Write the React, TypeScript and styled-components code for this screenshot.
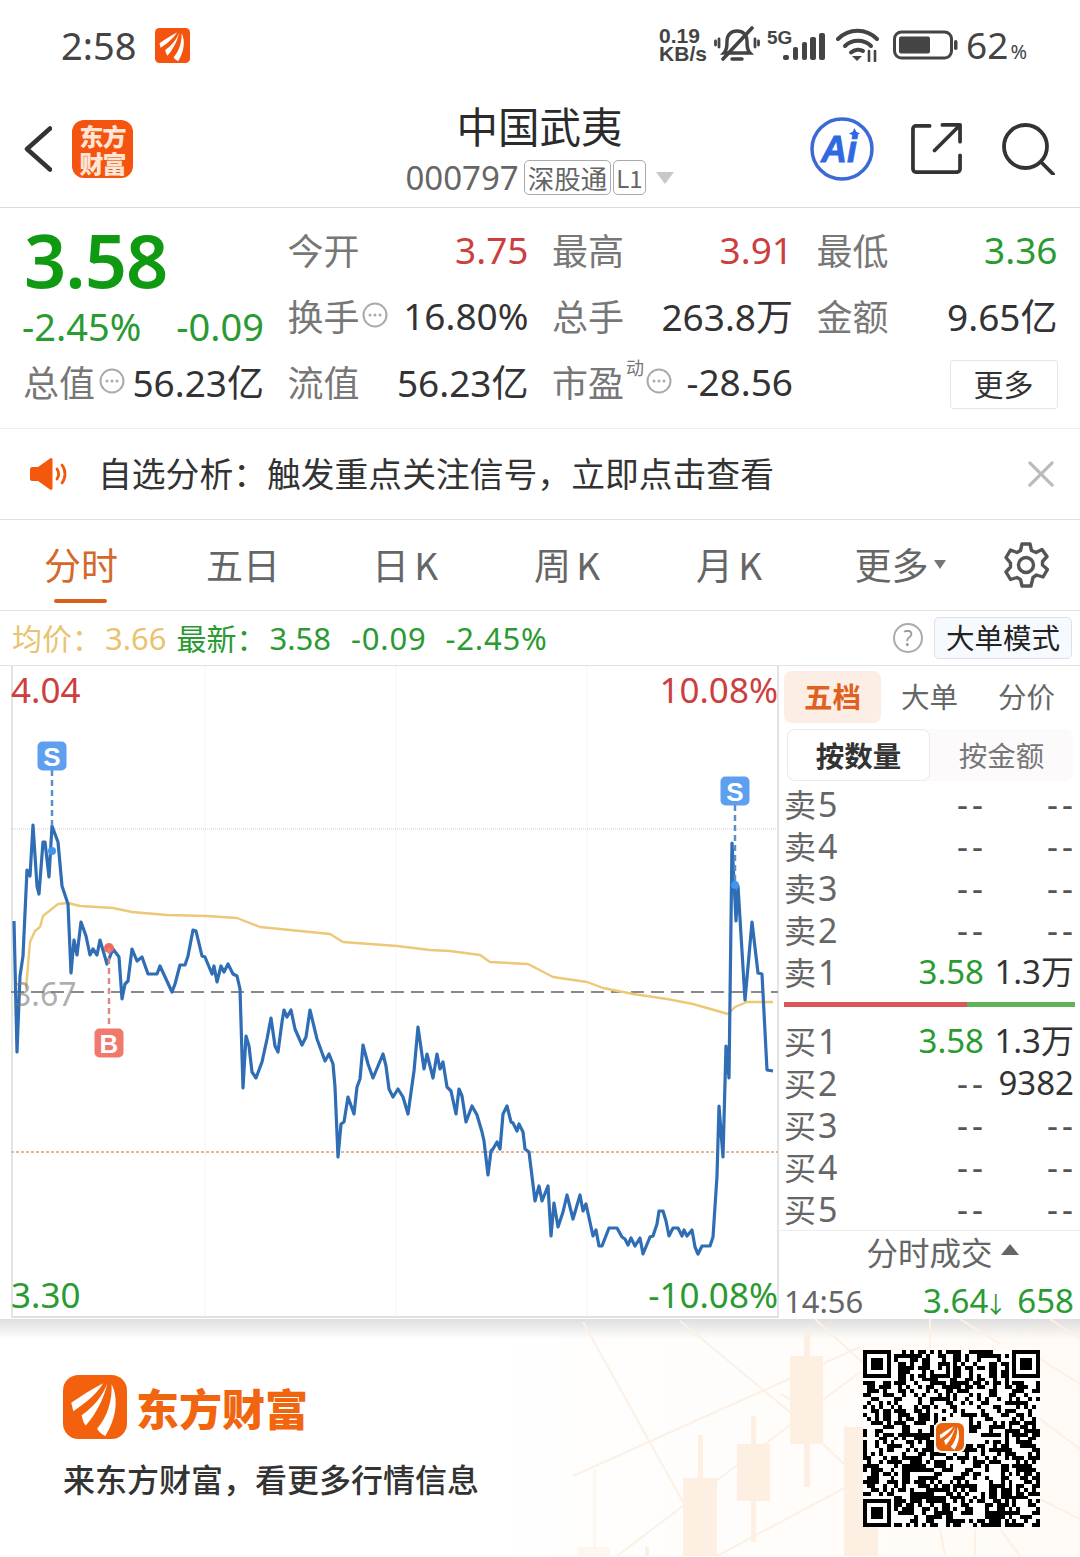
import React from "react";
import styled, { createGlobalStyle } from "styled-components";

const GlobalStyle = createGlobalStyle`
  html, body { margin: 0; padding: 0; background: #fff; }
  * { box-sizing: border-box; }
  body { font-family: "Noto Sans", "Noto Sans CJK SC", sans-serif; color: #333; }
`;

const RED = "#cc3f3f";
const GREEN = "#2a9a32";
const YELLOW = "#e9c36f";
const CJK = `"Noto Sans CJK SC", "Noto Sans", sans-serif`;

const Page = styled.div`
  width: 1080px;
  height: 1557px;
  overflow: hidden;
  display: flex;
  flex-direction: column;
`;

/* status bar */
const StatusBar = styled.div`
  height: 90px;
  flex: none;
  display: flex;
  align-items: center;
  padding: 0 53px 0 61px;
  color: #444;
`;
const Clock = styled.span`
  font-size: 38px;
  line-height: 1;
  margin: -1px 19px 0 0;
`;
const StatusRight = styled.div`
  margin-left: auto;
  display: flex;
  align-items: center;
`;
const NetSpeed = styled.div`
  font-family: "Liberation Sans", sans-serif;
  font-weight: 700;
  font-size: 21px;
  line-height: 18px;
  width: 55px;
`;
const BatteryText = styled.span`
  font-size: 37px;
  line-height: 1;
  margin: -1px 0 0 7px;
  small { font-size: 20px; margin-left: 2px; }
`;

/* header */
const Header = styled.div`
  height: 118px;
  flex: none;
  display: grid;
  grid-template-columns: 1fr auto 1fr;
  align-items: center;
  padding: 0 25px 0 24px;
  border-bottom: 1px solid #dcdcdc;
`;
const HeaderLeft = styled.div`
  display: flex;
  align-items: center;
  gap: 20px;
`;
const AppBadge = styled.div`
  width: 61px;
  height: 58px;
  border-radius: 12px;
  background: #f4540f;
  color: #ffe6d4;
  font-family: ${CJK};
  font-weight: 900;
  font-size: 24px;
  line-height: 27px;
  letter-spacing: -1px;
  text-align: center;
  padding-top: 2px;
`;
const TitleBlock = styled.div`
  display: flex;
  flex-direction: column;
  align-items: center;
  margin-top: -1px;
`;
const StockName = styled.div`
  font-family: ${CJK};
  font-size: 41.5px;
  line-height: 52px;
  color: #2b2b2b;
`;
const CodeRow = styled.div`
  display: flex;
  align-items: center;
  height: 40px;
  margin-top: 7px;
  gap: 2px;
`;
const Code = styled.span`
  font-size: 33px;
  line-height: 1;
  color: #666;
  margin-right: 3px;
`;
const Tag = styled.span`
  border: 1px solid #aaa;
  border-radius: 5px;
  height: 35px;
  padding: 0 3px;
  display: flex;
  align-items: center;
  font-family: ${CJK};
  font-size: 26.5px;
  color: #666;
`;
const LevelTag = styled(Tag)`
  padding: 0 2px;
  font-size: 24px;
`;
const DropArrow = styled.span`
  width: 0;
  height: 0;
  margin-left: 8px;
  border-left: 9px solid transparent;
  border-right: 9px solid transparent;
  border-top: 12px solid #c8c8c8;
`;
const HeaderRight = styled.div`
  display: flex;
  align-items: center;
  justify-content: flex-end;
  gap: 37px;
`;

/* quote */
const Quote = styled.div`
  height: 221px;
  flex: none;
  padding: 8px 23px 0 24px;
  display: grid;
  grid-template-columns: 240px 240px 240px 240px;
  column-gap: 24.5px;
  grid-template-rows: repeat(3, 66px);
  border-bottom: 1px solid #eee;
`;
const PriceCol = styled.div`
  grid-row: 1 / span 3;
  display: flex;
  flex-direction: column;
`;
const BigPrice = styled.div`
  height: 88px;
  font-size: 74px;
  font-weight: 600;
  line-height: 88px;
  color: #0f9a12;
  letter-spacing: -1px;
`;
const ChangeRow = styled.div`
  height: 44px;
  display: flex;
  justify-content: space-between;
  align-items: center;
  font-size: 38px;
  color: ${GREEN};
  margin-left: -2px;
`;
const Cell = styled.div`
  display: flex;
  align-items: center;
  font-size: 37px;
  white-space: nowrap;
`;
const TotalCell = styled(Cell)`
  height: 66px;
`;
const Label = styled.span`
  font-family: ${CJK};
  color: #777;
  font-size: 36px;
  margin-left: -1px;
`;
const Value = styled.span<{ $color?: string }>`
  margin-left: auto;
  color: ${(p) => p.$color || "#333"};
  font-family: "Noto Sans", "Noto Sans CJK SC", sans-serif;
`;
const Sup = styled.sup`
  font-family: ${CJK};
  font-size: 18px;
  color: #777;
  margin: 0 -18px 0 2px;
  line-height: 1;
  align-self: flex-start;
  padding-top: 10px;
`;
const MoreBtn = styled.div`
  margin-left: auto;
  margin-top: 7px;
  width: 108px;
  height: 49px;
  padding-bottom: 4px;
  border: 1px solid #e6e6e6;
  border-radius: 3px;
  display: flex;
  align-items: center;
  justify-content: center;
  font-family: ${CJK};
  font-size: 30px;
  color: #333;
`;

/* notice */
const Notice = styled.div`
  height: 91px;
  flex: none;
  display: flex;
  align-items: center;
  padding: 0 26px 0 30px;
  border-bottom: 1px solid #e2e2e2;
`;
const NoticeText = styled.span`
  font-family: ${CJK};
  font-size: 33.8px;
  color: #333;
  margin: -4px 0 0 30px;
  white-space: nowrap;
`;

/* period tabs */
const Tabs = styled.div`
  height: 91px;
  flex: none;
  display: flex;
  align-items: center;
  border-bottom: 1px solid #e2e2e2;
`;
const Tab = styled.div<{ $active?: boolean }>`
  width: 162px;
  height: 100%;
  position: relative;
  display: flex;
  align-items: center;
  justify-content: center;
  padding-bottom: 2px;
  font-family: ${CJK};
  font-size: 37px;
  word-spacing: -3px;
  color: ${(p) => (p.$active ? "#d4692a" : "#666")};
  ${(p) =>
    p.$active &&
    `&::after {
      content: "";
      position: absolute;
      left: 54px;
      bottom: 7px;
      width: 53px;
      height: 4px;
      border-radius: 2px;
      background: #d9601a;
    }`}
`;
const TabMore = styled(Tab)`
  padding-left: 18px;
  gap: 5px;
`;
const TinyDown = styled.span`
  width: 0;
  height: 0;
  border-left: 6px solid transparent;
  border-right: 6px solid transparent;
  border-top: 9px solid #777;
`;
const GearWrap = styled.div`
  margin-left: 31px;
  display: flex;
`;

/* info line */
const InfoLine = styled.div`
  height: 55px;
  flex: none;
  display: flex;
  align-items: center;
  padding: 0 8px 0 12px;
  font-size: 31px;
  border-bottom: 1px solid #e2e2e2;
`;
const InfoCjk = styled.span<{ $color: string; $gap?: number }>`
  font-family: ${CJK};
  font-size: 30px;
  margin: -2px 0 0 ${(p) => p.$gap || 0}px;
  color: ${(p) => p.$color};
`;
const InfoNum = styled.span<{ $color: string; $gap: number; $wide?: boolean }>`
  color: ${(p) => p.$color};
  margin-left: ${(p) => p.$gap}px;
  margin-right: -1px;
  letter-spacing: ${(p) => (p.$wide ? "0.8px" : 0)};
`;
const HelpIcon = styled.span`
  margin-left: auto;
  width: 30px;
  height: 30px;
  border: 2px solid #aaa;
  border-radius: 50%;
  display: flex;
  align-items: center;
  justify-content: center;
  color: #999;
  font-size: 21px;
  line-height: 1;
`;
const ModeBtn = styled.div`
  margin-left: 11px;
  width: 138px;
  height: 42px;
  padding-bottom: 3px;
  background: #f6f9fd;
  border: 1px solid #dde2ea;
  border-radius: 5px;
  display: flex;
  align-items: center;
  justify-content: center;
  font-family: ${CJK};
  font-size: 28.5px;
  color: #222;
`;

/* chart + order book */
const Market = styled.div`
  height: 653px;
  flex: none;
  display: flex;
  padding-left: 11px;
`;
const ChartBox = styled.div`
  width: 768px;
  height: 652px;
  position: relative;
  border-left: 2px solid #e4e4e4;
  border-right: 2px solid #e4e4e4;
  border-bottom: 2px solid #e0e0e0;
`;
const ChartSvg = styled.svg`
  display: block;
  position: absolute;
  left: -2px;
  top: 0;
`;
const ChartLabel = styled.span<{ $color: string; $side: "left" | "right"; $bottom?: boolean }>`
  position: absolute;
  ${(p) => (p.$side === "left" ? "left: -2px;" : "right: -1px;")}
  ${(p) => (p.$bottom ? "bottom: -2px;" : "top: 1px;")}
  font-size: 35px;
  line-height: 46px;
  color: ${(p) => p.$color};
`;
const MidLabel = styled.span`
  position: absolute;
  left: 0;
  top: 305px;
  font-size: 32px;
  line-height: 46px;
  color: rgba(120, 120, 120, 0.6);
`;
const Book = styled.div`
  flex: 1;
  padding: 5px 0 0 5px;
  display: flex;
  flex-direction: column;
`;
const BookTabs = styled.div`
  height: 52px;
  flex: none;
  display: grid;
  grid-template-columns: 97px 97px 97px;
  align-items: stretch;
`;
const BookTab = styled.div<{ $active?: boolean }>`
  display: flex;
  align-items: center;
  justify-content: center;
  padding-bottom: 4px;
  font-family: ${CJK};
  font-size: 28.5px;
  font-weight: ${(p) => (p.$active ? 700 : 400)};
  color: ${(p) => (p.$active ? "#e0601f" : "#666")};
  background: ${(p) => (p.$active ? "#fdeee5" : "transparent")};
  border-radius: 8px;
`;
const ModeTabs = styled.div`
  height: 52px;
  flex: none;
  margin: 6px 7px 2px 3px;
  display: grid;
  grid-template-columns: 143px 1fr;
  background: #fdfafc;
  border-radius: 8px;
`;
const ModeTab = styled.div<{ $active?: boolean }>`
  display: flex;
  align-items: center;
  justify-content: center;
  padding-bottom: 2px;
  font-family: ${CJK};
  font-size: 28.5px;
  font-weight: ${(p) => (p.$active ? 700 : 400)};
  color: ${(p) => (p.$active ? "#333" : "#777")};
  background: ${(p) => (p.$active ? "#fff" : "transparent")};
  border: ${(p) => (p.$active ? "1px solid #eaeaea" : "none")};
  border-radius: 8px;
`;
const BookRow = styled.div`
  height: 42px;
  flex: none;
  display: grid;
  grid-template-columns: 1fr 120px 90px;
  align-items: center;
  padding: 0 6px 2px 0;
  font-size: 33px;
  white-space: nowrap;
`;
const RowName = styled.span`
  display: flex;
  align-items: baseline;
  gap: 2px;
  color: #666;
  font-size: 34px;
  line-height: 40px;
  em {
    font-style: normal;
    font-family: ${CJK};
    font-size: 32px;
    line-height: 40px;
  }
`;
const RowPrice = styled.span<{ $color?: string }>`
  text-align: right;
  line-height: 40px;
  color: ${(p) => p.$color || "#555"};
  ${(p) => !p.$color && "font-size: 34px; letter-spacing: 4px; margin-right: -3px;"}
`;
const RowQty = styled.span<{ $dash?: boolean }>`
  text-align: right;
  line-height: 40px;
  color: ${(p) => (p.$dash ? "#555" : "#333")};
  ${(p) => p.$dash && "font-size: 34px; letter-spacing: 4px; margin-right: -3px;"}
`;
const DepthBar = styled.div`
  height: 5px;
  flex: none;
  margin: 9px 5px 13px 0;
  display: flex;
`;
const DepthPart = styled.div<{ $color: string; $grow: number }>`
  flex: ${(p) => p.$grow};
  background: ${(p) => p.$color};
`;
const TradeTitle = styled.div`
  height: 46px;
  flex: none;
  margin-left: -5px;
  padding: 0 0 5px 26px;
  border-top: 1px solid #eee;
  display: flex;
  align-items: center;
  justify-content: center;
  gap: 8px;
  font-family: ${CJK};
  font-size: 31.5px;
  color: #666;
`;
const UpArrow = styled.span`
  width: 0;
  height: 0;
  margin-bottom: 3px;
  border-left: 9px solid transparent;
  border-right: 9px solid transparent;
  border-bottom: 11px solid #666;
`;
const TradeRow = styled.div`
  height: 48px;
  flex: none;
  display: flex;
  align-items: center;
  padding: 1px 6px 0 0;
  font-size: 33px;
  color: ${GREEN};
  white-space: nowrap;
`;
const TradeTime = styled.span`
  color: #666;
  font-size: 31px;
  margin-right: auto;
`;
const TradeArrow = styled.span`
  font-size: 23px;
  margin: 0 -5px 0 -4px;
`;
const TradeQty = styled.span`
  margin-left: 15px;
`;

/* footer */
const Footer = styled.div`
  flex: 1;
  position: relative;
  padding: 0 0 0 63px;
  background:
    linear-gradient(180deg, #dedede 0, rgba(255, 255, 255, 0) 20px),
    linear-gradient(90deg, #fff 45%, #fffaf5 100%);
`;
const FooterArt = styled.svg`
  position: absolute;
  left: 0;
  top: 0;
`;
const FooterLeft = styled.div`
  position: relative;
  padding-top: 56px;
`;
const Brand = styled.div`
  display: flex;
  align-items: center;
  gap: 9px;
`;
const BrandName = styled.span`
  font-family: ${CJK};
  font-weight: 900;
  font-size: 43px;
  line-height: 64px;
  color: #f1650f;
`;
const Slogan = styled.div`
  font-family: ${CJK};
  font-weight: 500;
  font-size: 32px;
  line-height: 40px;
  margin-top: 19px;
  color: #333;
`;
const QrBox = styled.div`
  position: absolute;
  left: 863px;
  top: 31px;
  width: 177px;
  height: 177px;
  background: #fff;
`;
const QrLogo = styled.div`
  position: absolute;
  left: 73px;
  top: 73px;
  display: flex;
  border-radius: 6px;
  outline: 2px solid #fff;
`;

/* icons */
const Sail: React.FC<{ size: number; bg?: string; rx?: number }> = ({ size, bg = "#f4610c", rx = 15 }) => (
  <svg width={size} height={size} viewBox="0 0 62 62" style={{ display: "block", flex: "none" }}>
    <rect width="62" height="62" rx={rx} fill={bg} />
    <g fill="#fff">
      <path d="M8 27C18 20 29 13 39 8C33 18 22 27 10 35Z" />
      <path d="M43 8C40 22 32 38 22 49C19 45 19 42 18 39C30 31 39 19 43 8Z" />
      <path d="M47 9C54 22 52 42 41 59C37 57 35 55 33 52C43 41 48 24 47 9Z" />
    </g>
  </svg>
);

const MuteBell = () => (
  <svg width="46" height="38" viewBox="0 0 46 38" fill="none" stroke="#444" strokeLinecap="round">
    <path d="M10 27c3-3 3-7 3-12 0-6 4-10 10-10 6 0 10 4 10 10 0 5 0 9 3 12z" strokeWidth="3.400" />
    <path d="M18 33h10" strokeWidth="3.400" />
    <path d="M38 2L9 33" strokeWidth="3.600" />
    <path d="M5 13v8M1.500 15v4M41 13v8M44.500 15v4" strokeWidth="2.800" />
  </svg>
);
const Signal = () => (
  <svg width="60" height="36" viewBox="0 -4 60 36" fill="#444" style={{ marginLeft: 7, marginTop: -4 }}>
    <text x="0" y="15" fontFamily="Liberation Sans" fontWeight="700" fontSize="19">5G</text>
    <rect x="16" y="26" width="6" height="5" rx="2" />
    <rect x="26" y="18" width="5" height="13" rx="2" />
    <rect x="35" y="13" width="5" height="18" rx="2" />
    <rect x="43" y="8" width="6" height="23" rx="2" />
    <rect x="52" y="4" width="6" height="27" rx="2" />
  </svg>
);
const Wifi = () => (
  <svg width="44" height="34" viewBox="0 0 44 34" fill="none" stroke="#444" strokeWidth="4" strokeLinecap="round" style={{ marginLeft: 9 }}>
    <path d="M2 11C13 0 30 0 41 11" />
    <path d="M9 18C16 11 28 11 35 18" />
    <path d="M15 24.500C19 21 24 21 27 23" />
    <path d="M16 28h10l-5 5z" fill="#444" stroke="none" />
    <path d="M33 23v10M39 23v10" strokeWidth="2.600" />
  </svg>
);
const Battery = () => (
  <svg width="66" height="30" viewBox="0 0 66 30" fill="none" style={{ marginLeft: 13 }}>
    <rect x="1.500" y="2" width="57" height="26" rx="7" stroke="#444" strokeWidth="3" />
    <rect x="6" y="6.500" width="31" height="17" rx="2" fill="#444" />
    <rect x="61" y="10" width="3.500" height="10" rx="1.700" fill="#444" />
  </svg>
);
const BackIcon = () => (
  <svg width="28" height="46" viewBox="0 0 28 46" fill="none" stroke="#333" strokeWidth="4.500" strokeLinecap="round" strokeLinejoin="round">
    <path d="M26 2.500L3 23l23 20.500" />
  </svg>
);
const AiIcon = () => (
  <svg width="64" height="64" viewBox="0 0 64 64">
    <circle cx="32" cy="32" r="30" fill="none" stroke="#3b69d6" strokeWidth="3.500" />
    <text x="11" y="45" fontFamily="Liberation Sans" fontStyle="italic" fontWeight="700" fontSize="36" fill="#2f68e3" stroke="#2f68e3" strokeWidth="0.800">Ai</text>
    <path d="M44.500 11l1.800 3.700 3.700 1.800-3.700 1.800-1.800 3.700-1.800-3.700-3.700-1.800 3.700-1.800z" fill="#2f68e3" />
  </svg>
);
const ShareIcon = () => (
  <svg width="51" height="51" viewBox="0 0 52 52" fill="none" stroke="#333" strokeWidth="3.800" strokeLinecap="round" strokeLinejoin="round">
    <path d="M19 3H5a3 3 0 0 0-3 3v41a3 3 0 0 0 3 3h42a3 3 0 0 0 3-3V33" />
    <path d="M24 28L50 2M32 2h18v17" />
  </svg>
);
const SearchIcon = () => (
  <svg width="53" height="52" viewBox="0 0 53 52" fill="none" stroke="#333" strokeWidth="3.800" strokeLinecap="round" style={{ marginLeft: 3 }}>
    <circle cx="23.500" cy="23.500" r="21.500" />
    <path d="M39 39l12 12" />
  </svg>
);
const DotsIcon: React.FC<{ gap?: number }> = ({ gap = 4 }) => (
  <svg width="26" height="26" viewBox="0 0 26 26" style={{ marginLeft: gap, flex: "none" }}>
    <circle cx="13" cy="13" r="11.500" fill="none" stroke="#aaa" strokeWidth="2" />
    <g fill="#aaa">
      <circle cx="8" cy="13" r="1.500" />
      <circle cx="13" cy="13" r="1.500" />
      <circle cx="18" cy="13" r="1.500" />
    </g>
  </svg>
);
const Speaker = () => (
  <svg width="38" height="34" viewBox="0 0 38 34" style={{ flex: "none" }}>
    <path d="M2 10h6L20 1.500c1.500-1 2.500 0 2.500 1.500v28c0 1.500-1 2.500-2.500 1.500L8 24H2c-1 0-2-1-2-2V12c0-1 1-2 2-2z" fill="#f4580c" />
    <path d="M27 12c2 3 2 7 0 10M32 8c4 5 4 13 0 18" fill="none" stroke="#f4580c" strokeWidth="2.800" strokeLinecap="round" />
  </svg>
);
const CloseX = () => (
  <svg width="26" height="26" viewBox="0 0 28 28" stroke="#bbb" strokeWidth="3.400" strokeLinecap="round" style={{ marginLeft: "auto" }}>
    <path d="M2 2l24 24M26 2L2 26" />
  </svg>
);
const Gear = () => (
  <svg width="46" height="46" viewBox="0 0 46 46" fill="none" stroke="#555" strokeWidth="3.400" strokeLinejoin="round">
    <path d="M19 2h8l1.500 6.500 4.500 2 6-3 5 7-4.500 5v3.500l5 4.500-4.500 7.500-6.500-2-3.500 2.500L28 44h-9l-1.500-6.500-3.500-2-6.500 2L3 30l4.500-5v-4L3 15.500 7.500 8l6.500 2.500 3.500-2z" />
    <circle cx="23" cy="23" r="7.500" />
  </svg>
);

/* chart data in screen coordinates */
const PRICE = "14,922 17,1053 20,977 23,957 27,871 30,877 33,826 37,887 39,895 43,843 45,843 49,878 52,827 58,843 62,887 68,905 71,974 74,941 77,956 81,923 86,937 90,956 93,950 97,956 100,941 107,965 113,950 119,958 122,1000 125,985 128,982 132,950 137,962 142,958 148,975 157,975 160,967 172,993 175,985 180,966 185,966 188,957 193,931 196,932 202,957 205,958 212,975 214,967 217,983 221,967 224,973 228,965 233,975 237,977 240,990 243,1089 246,1037 249,1047 252,1073 256,1079 262,1063 267,1040 271,1019 275,1047 278,1053 282,1023 284,1011 287,1018 291,1011 295,1030 302,1046 306,1038 310,1011 317,1040 325,1062 329,1055 333,1065 335,1088 338,1158 341,1125 344,1123 348,1098 354,1115 357,1088 360,1080 363,1046 368,1065 373,1079 383,1055 386,1067 389,1090 393,1098 398,1090 403,1098 408,1115 414,1072 418,1028 424,1070 427,1055 433,1079 437,1055 440,1070 443,1063 447,1088 451,1092 456,1115 459,1090 462,1097 466,1123 472,1107 477,1116 482,1133 484,1142 488,1176 491,1152 493,1150 497,1143 500,1150 503,1115 507,1107 511,1123 513,1124 517,1132 519,1125 523,1133 525,1150 529,1153 535,1202 539,1187 542,1202 548,1187 551,1237 554,1204 558,1228 563,1213 567,1196 573,1220 580,1196 583,1212 586,1205 593,1237 596,1231 599,1247 602,1247 609,1229 617,1229 622,1238 625,1240 628,1246 631,1239 635,1247 640,1239 643,1255 650,1238 653,1237 657,1225 659,1212 663,1212 666,1222 669,1237 673,1229 678,1229 682,1237 684,1231 687,1237 692,1231 695,1248 698,1255 702,1247 710,1247 713,1238 717,1177 719,1107 723,1158 726,1047 729,1079 732,844 736,922 738,887 745,1001 752,923 754,940 758,974 762,975 767,1071 773,1072";
const AVERAGE = "26,990 30,943 35,932 40,928 43,917 58,905 68,904 80,907 113,909 132,913 167,916 207,917 237,919 260,928 300,932 330,935 343,943 397,947 430,951 450,952 480,956 490,963 528,965 553,978 587,983 603,989 633,995 667,1000 693,1005 728,1015 735,1008 747,1003 773,1003";

const Signpost: React.FC<{ x: number; y: number; tipY: number; label: string; color: string; line: string }> = ({ x, y, tipY, label, color, line }) => (
  <g>
    <line x1={x} x2={x} y1={y > tipY ? tipY : y + 14} y2={y > tipY ? y - 18 : tipY} stroke={line} strokeWidth="2.500" strokeDasharray="6 4" />
    <rect x={x - 14.5} y={y - 14.5} width="29" height="29" rx="5" fill={color} />
    <text x={x} y={y + 9.500} textAnchor="middle" fontFamily="Liberation Sans" fontWeight="700" fontSize="26" fill="#fff">{label}</text>
  </g>
);

const Chart = () => (
  <ChartSvg width="770" height="651" viewBox="11 667 770 651">
    <g stroke="#eaeaea" strokeWidth="1" strokeDasharray="1 1">
      <path d="M205 667V1317M396 667V1317M587 667V1317" fill="none" />
      <path d="M11 830H778" stroke="#cfcfcf" fill="none" />
    </g>
    <path d="M11 993H778" stroke="#8a8a8a" strokeWidth="2" strokeDasharray="13 7" fill="none" />
    <path d="M11 1153H778" stroke="#e2b79c" strokeWidth="2" strokeDasharray="3 2" fill="none" />
    <polyline points={AVERAGE} fill="none" stroke="#ecc877" strokeWidth="2.400" strokeLinejoin="round" />
    <polyline points={PRICE} fill="none" stroke="#2f6db5" strokeWidth="3.200" strokeLinejoin="round" />
    <circle cx="52" cy="852" r="4" fill="#3f95f0" />
    <circle cx="109" cy="949" r="5" fill="#ef6b62" />
    <circle cx="735" cy="886" r="4" fill="#3f95f0" />
    <Signpost x={52} y={757} tipY={827} label="S" color="#5f9ff0" line="#5b8fcb" />
    <Signpost x={735} y={792} tipY={886} label="S" color="#5f9ff0" line="#5b8fcb" />
    <Signpost x={109} y={1044} tipY={949} label="B" color="#f0786c" line="#d98a82" />
  </ChartSvg>
);

/* fixed pseudo random modules, seeded so every render gives the same code */
const QR_SIZE = 45;
const qrDark = (() => {
  const cells: string[] = [];
  let seed = 7919;
  const next = () => {
    seed = (seed * 1103515245 + 12345) & 0x7fffffff;
    return (seed >> 16) & 1;
  };
  const finder = (x: number, y: number) =>
    x >= 0 && y >= 0 && x < 8 && y < 8
      ? x < 7 && y < 7 && (x === 0 || y === 0 || x === 6 || y === 6 || (x >= 2 && x <= 4 && y >= 2 && y <= 4))
      : null;
  for (let y = 0; y < QR_SIZE; y++) {
    for (let x = 0; x < QR_SIZE; x++) {
      const f =
        finder(x, y) ?? finder(QR_SIZE - 1 - x, y) ?? finder(x, QR_SIZE - 1 - y);
      const dark = f === null ? next() === 1 : f;
      if (dark) cells.push(`M${x} ${y}h1v1h-1z`);
    }
  }
  return cells.join("");
})();

const FooterBackdrop = () => (
  <FooterArt width="1080" height="237" viewBox="0 1320 1080 237">
    <g stroke="#fdf0e4" strokeWidth="2" fill="none">
      <path d="M583 1323L683 1503M680 1322L790 1413M573 1477L860 1348M617 1557L860 1373M823 1445L870 1490M717 1557L880 1470" />
      <path d="M815 1320L875 1375M930 1320V1350M960 1320L1000 1345M1040 1360L1080 1385M1040 1420L1080 1450M1040 1500L1080 1520M1050 1320L1080 1340M790 1400L780 1395" />
      <path d="M940 1530L945 1557M975 1530L975 1557M1000 1530L1020 1557" />
    </g>
    <g fill="#fdf0e3">
      <rect x="593" y="1470" width="3" height="80" opacity=".5" />
      <rect x="577" y="1548" width="33" height="9" opacity=".5" />
      <rect x="645" y="1548" width="4" height="9" />
      <rect x="698" y="1436" width="5" height="44" />
      <rect x="683" y="1479" width="34" height="78" />
      <rect x="751" y="1417" width="5" height="126" />
      <rect x="737" y="1445" width="33" height="57" />
      <rect x="804" y="1332" width="6" height="156" />
      <rect x="790" y="1357" width="33" height="88" />
      <rect x="844" y="1428" width="34" height="129" />
    </g>
  </FooterArt>
);

const names = ["卖", "买"];

const Row: React.FC<{ side: number; n: number; price?: boolean; qty?: string }> = ({ side, n, price, qty }) => (
  <BookRow>
    <RowName><em>{names[side]}</em>{n}</RowName>
    <RowPrice $color={price ? GREEN : undefined}>{price ? "3.58" : "--"}</RowPrice>
    <RowQty $dash={!qty}>{qty || "--"}</RowQty>
  </BookRow>
);

export default function App() {
  return (
    <Page>
      <GlobalStyle />
      <StatusBar>
        <Clock>2:58</Clock>
        <Sail size={35} bg="#f4540f" rx={8} />
        <StatusRight>
          <NetSpeed>0.19<br />KB/s</NetSpeed>
          <MuteBell />
          <Signal />
          <Wifi />
          <Battery />
          <BatteryText>62<small>%</small></BatteryText>
        </StatusRight>
      </StatusBar>

      <Header>
        <HeaderLeft>
          <BackIcon />
          <AppBadge>东方<br />财富</AppBadge>
        </HeaderLeft>
        <TitleBlock>
          <StockName>中国武夷</StockName>
          <CodeRow>
            <Code>000797</Code>
            <Tag>深股通</Tag>
            <LevelTag>L1</LevelTag>
            <DropArrow />
          </CodeRow>
        </TitleBlock>
        <HeaderRight>
          <AiIcon />
          <ShareIcon />
          <SearchIcon />
        </HeaderRight>
      </Header>

      <Quote>
        <PriceCol>
          <BigPrice>3.58</BigPrice>
          <ChangeRow><span>-2.45%</span><span>-0.09</span></ChangeRow>
          <TotalCell>
            <Label>总值</Label>
            <DotsIcon />
            <Value>56.23亿</Value>
          </TotalCell>
        </PriceCol>
        <Cell><Label>今开</Label><Value $color={RED}>3.75</Value></Cell>
        <Cell><Label>最高</Label><Value $color={RED}>3.91</Value></Cell>
        <Cell><Label>最低</Label><Value $color={GREEN}>3.36</Value></Cell>
        <Cell><Label>换手</Label><DotsIcon gap={2} /><Value>16.80%</Value></Cell>
        <Cell><Label>总手</Label><Value>263.8万</Value></Cell>
        <Cell><Label>金额</Label><Value>9.65亿</Value></Cell>
        <Cell><Label>流值</Label><Value>56.23亿</Value></Cell>
        <Cell><Label>市盈</Label><Sup>动</Sup><DotsIcon gap={20} /><Value>-28.56</Value></Cell>
        <Cell><MoreBtn>更多</MoreBtn></Cell>
      </Quote>

      <Notice>
        <Speaker />
        <NoticeText>自选分析：触发重点关注信号，立即点击查看</NoticeText>
        <CloseX />
      </Notice>

      <Tabs>
        <Tab $active>分时</Tab>
        <Tab>五日</Tab>
        <Tab>日 K</Tab>
        <Tab>周 K</Tab>
        <Tab>月 K</Tab>
        <TabMore>更多<TinyDown /></TabMore>
        <GearWrap><Gear /></GearWrap>
      </Tabs>

      <InfoLine>
        <InfoCjk $color={YELLOW}>均价：</InfoCjk>
        <InfoNum $color={YELLOW} $gap={3}>3.66</InfoNum>
        <InfoCjk $color={GREEN} $gap={11}>最新：</InfoCjk>
        <InfoNum $color={GREEN} $gap={3}>3.58</InfoNum>
        <InfoNum $color={GREEN} $gap={21} $wide>-0.09</InfoNum>
        <InfoNum $color={GREEN} $gap={20} $wide>-2.45%</InfoNum>
        <HelpIcon>?</HelpIcon>
        <ModeBtn>大单模式</ModeBtn>
      </InfoLine>

      <Market>
        <ChartBox>
          <Chart />
          <ChartLabel $color={RED} $side="left">4.04</ChartLabel>
          <ChartLabel $color={RED} $side="right">10.08%</ChartLabel>
          <MidLabel>3.67</MidLabel>
          <ChartLabel $color={GREEN} $side="left" $bottom>3.30</ChartLabel>
          <ChartLabel $color={GREEN} $side="right" $bottom>-10.08%</ChartLabel>
        </ChartBox>
        <Book>
          <BookTabs>
            <BookTab $active>五档</BookTab>
            <BookTab>大单</BookTab>
            <BookTab>分价</BookTab>
          </BookTabs>
          <ModeTabs>
            <ModeTab $active>按数量</ModeTab>
            <ModeTab>按金额</ModeTab>
          </ModeTabs>
          {[5, 4, 3, 2].map((n) => <Row key={n} side={0} n={n} />)}
          <Row side={0} n={1} price qty="1.3万" />
          <DepthBar>
            <DepthPart $color="#d9575a" $grow={183} />
            <DepthPart $color="#62b257" $grow={108} />
          </DepthBar>
          <Row side={1} n={1} price qty="1.3万" />
          <Row side={1} n={2} qty="9382" />
          {[3, 4, 5].map((n) => <Row key={n} side={1} n={n} />)}
          <TradeTitle>分时成交<UpArrow /></TradeTitle>
          <TradeRow>
            <TradeTime>14:56</TradeTime>
            <span>3.64<TradeArrow>↓</TradeArrow></span>
            <TradeQty>658</TradeQty>
          </TradeRow>
        </Book>
      </Market>

      <Footer>
        <FooterBackdrop />
        <FooterLeft>
          <Brand>
            <Sail size={64} />
            <BrandName>东方财富</BrandName>
          </Brand>
          <Slogan>来东方财富，看更多行情信息</Slogan>
        </FooterLeft>
        <QrBox>
          <svg width="177" height="177" viewBox={`0 0 ${QR_SIZE} ${QR_SIZE}`} shapeRendering="crispEdges">
            <path d={qrDark} fill="#000" />
          </svg>
          <QrLogo><Sail size={28} bg="#e8640f" rx={5} /></QrLogo>
        </QrBox>
      </Footer>
    </Page>
  );
}
